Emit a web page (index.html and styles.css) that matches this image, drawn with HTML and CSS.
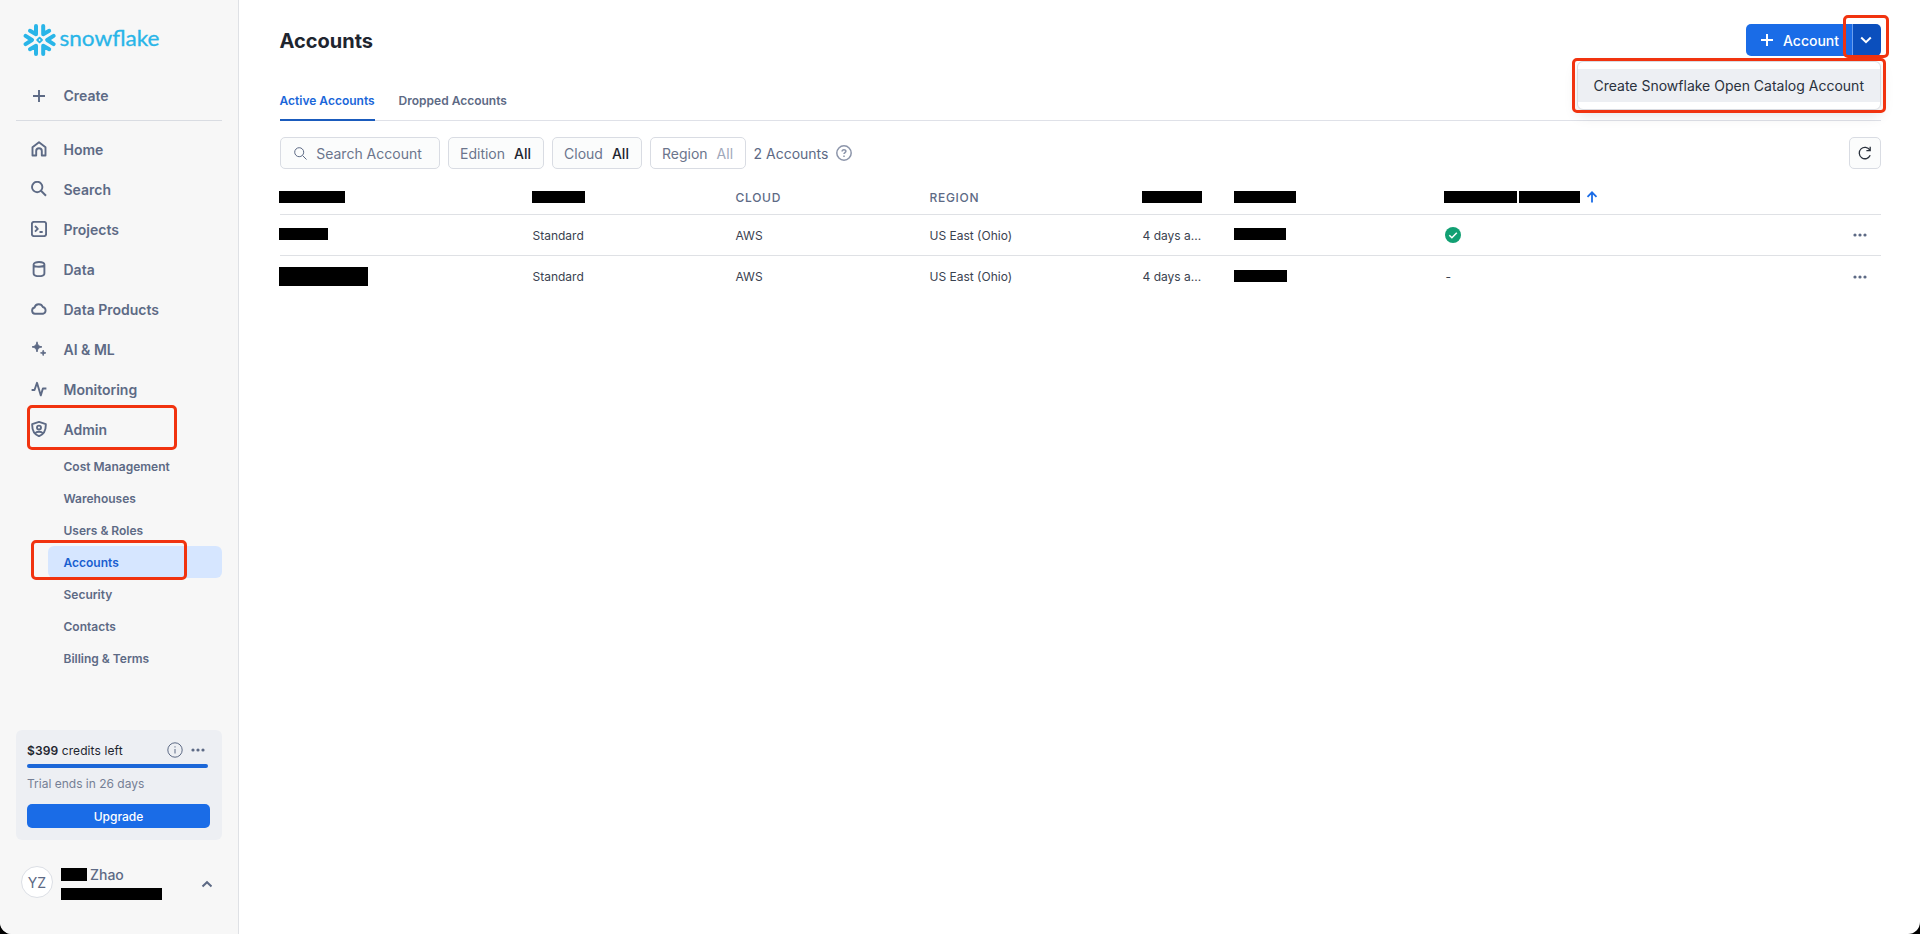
FILE: index.html
```html
<!DOCTYPE html>
<html lang="en">
<head>
    <meta charset="UTF-8">
    <meta name="viewport" content="width=device-width, initial-scale=1.0">
    <title>Accounts - Snowflake</title>
    <link rel="stylesheet" href="styles.css">
</head>
<body>
    <div class="app">
        <aside class="sidebar">
            <div class="logo">
                <svg width="144" height="34" viewBox="0 0 144 34">
                    <g fill="none" stroke="#29b5e8" stroke-width="4" stroke-linecap="round" stroke-linejoin="round">
                        <path d="M13 3v8.2l-6-3.4M20.2 3v8.2l6-3.4"/>
                        <path d="M13 31v-8.2l-6 3.4M20.2 31v-8.2l6 3.4"/>
                        <path d="M2.600 12.800L9 17l-6.400 4.200M30.600 12.800L24.200 17l6.400 4.200"/>
                        <path d="M16.600 14.600l2.400 2.400-2.400 2.400-2.400-2.400z" stroke-width="1.800"/>
                    </g>
                    <text class="logo-text" x="36.500" y="23" textLength="100" lengthAdjust="spacingAndGlyphs">snowflake</text>
                </svg>
            </div>

            <a class="nav-item create">
                <svg width="16" height="16" viewBox="0 0 16 16"><path d="M8 2v12M2 8h12"/></svg>
                <span>Create</span>
            </a>

            <nav class="nav">
                <a class="nav-item">
                    <svg width="16" height="16" viewBox="0 0 16 16"><path d="M1.500 6.200L8 1.200l6.500 5v8.300h-3.700V10a2.800 2.800 0 0 0-5.600 0v4.500H1.500z"/></svg>
                    <span>Home</span>
                </a>
                <a class="nav-item">
                    <svg width="16" height="16" viewBox="0 0 16 16"><circle cx="6.200" cy="6" r="5.200"/><path d="M10 9.800l5 4.900"/></svg>
                    <span>Search</span>
                </a>
                <a class="nav-item">
                    <svg width="16" height="16" viewBox="0 0 16 16"><rect x=".9" y=".9" width="14.200" height="14.200" rx="2"/><path d="M4 5l2.800 2.800L4 10.600M8.500 11h3.200"/></svg>
                    <span>Projects</span>
                </a>
                <a class="nav-item">
                    <svg width="16" height="16" viewBox="0 0 16 16"><path d="M2.600 3.600C2.600.2 13.400.2 13.400 3.600v8.600c0 4-10.800 4-10.800 0zM2.600 3.800c0 2.600 10.800 2.600 10.800 0"/></svg>
                    <span>Data</span>
                </a>
                <a class="nav-item">
                    <svg width="16" height="16" viewBox="0 0 16 16"><path d="M4 12.800a3.200 3.200 0 0 1-.4-6.300 4.300 4.300 0 0 1 8.200-.5 3.500 3.500 0 0 1 .2 6.800z"/></svg>
                    <span>Data Products</span>
                </a>
                <a class="nav-item">
                    <svg class="filled" width="16" height="16" viewBox="0 0 16 16"><path d="M6 .8c.7 3.500 1.600 4.400 5 5.100-3.400.7-4.300 1.600-5 5.100-.7-3.500-1.600-4.400-5-5.100 3.400-.7 4.300-1.600 5-5.100z"/><path d="M12.200 9.200c.4 1.800.9 2.300 2.700 2.700-1.800.4-2.300.9-2.700 2.700-.4-1.800-.9-2.300-2.700-2.700 1.800-.4 2.300-.9 2.700-2.700z"/></svg>
                    <span>AI &amp; ML</span>
                </a>
                <a class="nav-item">
                    <svg width="16" height="16" viewBox="0 0 16 16"><path d="M.6 9h2.900L6 1.800 9.800 14.400l2.100-6.900h3.500"/></svg>
                    <span>Monitoring</span>
                </a>
                <a class="nav-item">
                    <svg width="16" height="16" viewBox="0 0 16 16"><path d="M8 .9l6.800 2.300c.2 5.400-1.100 9.900-6.800 12-5.700-2.100-7-6.600-6.800-12zM4 12.600c1.600-2.400 6.400-2.400 8 0"/><circle cx="8" cy="6.600" r="2"/></svg>
                    <span>Admin</span>
                    <i class="mark mark-admin"></i>
                </a>
            </nav>

            <nav class="subnav">
                <a>Cost Management</a>
                <a>Warehouses</a>
                <a>Users &amp; Roles</a>
                <a class="active">Accounts<i class="mark mark-accounts"></i></a>
                <a>Security</a>
                <a>Contacts</a>
                <a>Billing &amp; Terms</a>
            </nav>

            <div class="trial">
                <div class="trial-head">
                    <span><b>$399</b> credits left</span>
                    <svg width="16" height="16" viewBox="0 0 16 16"><circle cx="8" cy="8" r="7.200"/><path d="M8 7v4.500M8 4.300v1.200"/></svg>
                    <svg class="dots" width="14" height="4" viewBox="0 0 14 4"><circle cx="2" cy="2" r="1.600"/><circle cx="7" cy="2" r="1.600"/><circle cx="12" cy="2" r="1.600"/></svg>
                </div>
                <div class="progress"></div>
                <p>Trial ends in 26 days</p>
                <button class="upgrade">Upgrade</button>
            </div>

            <div class="user">
                <div class="avatar">YZ</div>
                <div class="user-info">
                    <div class="user-name"><span class="redact r-first"></span>Zhao</div>
                    <span class="redact r-role"></span>
                </div>
                <svg width="12" height="8" viewBox="0 0 12 8"><path d="M1.500 6.500L6 2.200l4.500 4.300"/></svg>
            </div>
        </aside>

        <main class="main">
            <header class="header">
                <h1>Accounts</h1>
                <div class="split-button">
                    <button class="add">
                        <svg width="12" height="12" viewBox="0 0 12 12"><path d="M6 0v12M0 6h12"/></svg>
                        Account
                    </button>
                    <button class="toggle">
                        <svg width="12" height="8" viewBox="0 0 12 8"><path d="M1.200 1.500L6 6.100l4.800-4.600"/></svg>
                    </button>
                    <i class="mark mark-toggle"></i>
                    <div class="menu">
                        <div class="menu-item">Create Snowflake Open Catalog Account</div>
                        <i class="mark mark-menu"></i>
                    </div>
                </div>
            </header>

            <div class="tabs">
                <a class="tab active">Active Accounts</a>
                <a class="tab">Dropped Accounts</a>
            </div>

            <div class="filters">
                <div class="box search">
                    <svg width="13" height="13" viewBox="0 0 13 13"><circle cx="5.200" cy="5.200" r="4.500"/><path d="M8.500 8.500l4 4"/></svg>
                    Search Account
                </div>
                <div class="box edition">Edition <b>All</b></div>
                <div class="box cloud">Cloud <b>All</b></div>
                <div class="box region">Region <b>All</b></div>
                <span class="count">2 Accounts</span>
                <svg class="help" width="16" height="16" viewBox="0 0 16 16"><circle cx="8" cy="8" r="7.200"/><path d="M6.100 6.500c0-2.500 3.800-2.400 3.800-.2 0 1.300-1.900 1.400-1.900 2.800M8 10.600v1.300"/></svg>
                <button class="box refresh">
                    <svg width="14" height="14" viewBox="0 0 14 14"><path d="M12.200 9.300A5.700 5.700 0 1 1 11.800 4M12.200.8v3.800H8.400"/></svg>
                </button>
            </div>

            <div class="table">
                <div class="row head">
                    <span><i class="redact h1"></i></span>
                    <span><i class="redact h2"></i></span>
                    <span>CLOUD</span>
                    <span>REGION</span>
                    <span><i class="redact h3"></i></span>
                    <span><i class="redact h4"></i></span>
                    <span>
                        <i class="redact h5"></i><i class="redact h6"></i>
                        <svg class="sort" width="12" height="12" viewBox="0 0 12 12"><path d="M6 11.500V1.500M1.500 5.800L6 1.300l4.500 4.500"/></svg>
                    </span>
                    <span></span>
                </div>
                <div class="row">
                    <span><i class="redact n1"></i></span>
                    <span>Standard</span>
                    <span>AWS</span>
                    <span>US East (Ohio)</span>
                    <span>4 days a...</span>
                    <span><i class="redact l1"></i></span>
                    <span><svg class="check" width="16" height="16" viewBox="0 0 16 16"><circle cx="8" cy="8" r="8"/><path d="M4.300 8.200l2.600 2.500 4.900-5"/></svg></span>
                    <span><svg class="dots" width="14" height="4" viewBox="0 0 14 4"><circle cx="2" cy="2" r="1.600"/><circle cx="7" cy="2" r="1.600"/><circle cx="12" cy="2" r="1.600"/></svg></span>
                </div>
                <div class="row last">
                    <span><i class="redact n2"></i></span>
                    <span>Standard</span>
                    <span>AWS</span>
                    <span>US East (Ohio)</span>
                    <span>4 days a...</span>
                    <span><i class="redact l2"></i></span>
                    <span class="none">-</span>
                    <span><svg class="dots" width="14" height="4" viewBox="0 0 14 4"><circle cx="2" cy="2" r="1.600"/><circle cx="7" cy="2" r="1.600"/><circle cx="12" cy="2" r="1.600"/></svg></span>
                </div>
            </div>
        </main>
    </div>
</body>
</html>
```
FILE: styles.css
```css
* {
    box-sizing: border-box;
}
body {
    margin: 0;
    background: #000;
    font-family: Inter, sans-serif;
    font-size: 14px;
    color: #5d6a85;
}
h1, p {
    margin: 0;
}
button {
    padding: 0;
    border: none;
    font-family: inherit;
    cursor: pointer;
}
svg {
    display: block;
    flex-shrink: 0;
    fill: none;
    stroke: #5d6a85;
}
.app {
    display: flex;
    height: 934px;
    background: #fff;
    border-radius: 0 0 12px 12px;
    overflow: hidden;
}

/* sidebar */
.sidebar {
    width: 239px;
    padding: 0 16px;
    background: #f7f7f7;
    border-right: 1px solid #dfe1e5;
    display: flex;
    flex-direction: column;
}
.logo {
    height: 76px;
    padding: 23px 0 0 7px;
}
.logo svg {
    stroke: none;
}
.logo-text {
    font-family: Lato, sans-serif;
    font-size: 22px;
    fill: #29b5e8;
    stroke: #29b5e8;
    stroke-width: 0.3px;
}
.nav-item {
    position: relative;
    height: 40px;
    padding-left: 15px;
    display: flex;
    align-items: center;
    gap: 16.5px;
    font-weight: 600;
}
.nav-item svg {
    stroke-width: 1.9;
    stroke-linejoin: round;
}
.nav-item svg.filled {
    fill: #5d6a85;
    stroke-width: 0.9;
}
.create {
    width: 206px;
    height: 45px;
    padding-bottom: 5px;
    border-bottom: 1px solid #d9dce2;
}
.nav {
    padding-top: 8px;
}
.subnav {
    width: 206px;
    padding: 1px 0 0 32px;
    font-size: 12px;
    font-weight: 600;
}
.subnav a {
    position: relative;
    height: 32px;
    padding-left: 15.5px;
    display: flex;
    align-items: center;
}
.subnav .active {
    color: #1a5fd0;
    background: #d6e6ff;
    border-radius: 6px;
}
.mark {
    position: absolute;
    border: 3px solid #f1330f;
    border-radius: 5px;
    pointer-events: none;
}
.mark-admin {
    left: 11px;
    top: -4px;
    width: 150px;
    height: 45px;
}
.mark-accounts {
    left: -17px;
    top: -6px;
    width: 156px;
    height: 40px;
}
.trial {
    width: 206px;
    height: 110px;
    margin-top: 56px;
    padding: 12px 12px 0 11px;
    background: #edeff3;
    border-radius: 6px;
    font-size: 12px;
}
.trial-head {
    height: 16px;
    display: flex;
    align-items: center;
    color: #1e252f;
}
.trial-head span {
    flex: 1;
    letter-spacing: 0.1px;
}
.trial-head .dots {
    margin: 0 5px 0 8px;
}
.trial b {
    font-weight: 600;
}
.progress {
    width: 181px;
    height: 4px;
    margin-top: 6px;
    background: #1b67d8;
    border-radius: 2px;
}
.trial p {
    margin-top: 8px;
    line-height: 16px;
    color: #757f95;
}
.upgrade {
    display: block;
    width: 183px;
    height: 24px;
    margin-top: 12px;
    background: #1a6ce7;
    border-radius: 5px;
    color: #fff;
    font-size: 12px;
    font-weight: 500;
}
.user {
    width: 206px;
    height: 32px;
    margin-top: 26px;
    padding: 0 9px 0 5px;
    display: flex;
    align-items: center;
}
.user svg {
    margin-top: 4px;
    stroke-width: 2;
}
.avatar {
    width: 32px;
    height: 32px;
    border: 1px solid #dcdfe5;
    border-radius: 50%;
    background: #fff;
    line-height: 31px;
    text-align: center;
}
.user-info {
    flex: 1;
    padding: 1px 0 0 8px;
}
.user-name {
    height: 17px;
    display: flex;
    align-items: center;
    gap: 3px;
    font-weight: 500;
}
.redact {
    display: block;
    height: 12px;
    background: #000;
}
.r-first {
    width: 26px;
    height: 13px;
}
.r-role {
    width: 101px;
    margin-top: 5px;
}
.dots {
    fill: #5d6a85;
    stroke: none;
}

/* main */
.main {
    flex: 1;
    padding: 24px 39px 0 40.5px;
}
.header {
    height: 32px;
    display: flex;
    justify-content: space-between;
    align-items: center;
}
h1 {
    font-size: 20px;
    font-weight: 700;
    line-height: 32px;
    color: #1e252f;
    padding-top: 2px;
}
.split-button {
    position: relative;
    display: flex;
    height: 32px;
}
.split-button svg {
    stroke: #fff;
    stroke-width: 2;
}
.add {
    width: 106px;
    padding-left: 15px;
    display: flex;
    align-items: center;
    gap: 10px;
    background: #1a6ce7;
    border-radius: 5px 0 0 5px;
    color: #fff;
    font-size: 14px;
    font-weight: 500;
}
.toggle {
    width: 29px;
    padding-right: 2px;
    display: flex;
    align-items: center;
    justify-content: center;
    background: #0b4fbd;
    border-left: 1px solid #6c9fee;
    border-radius: 0 5px 5px 0;
}
.mark-toggle {
    right: -8px;
    top: -9px;
    width: 46px;
    height: 43px;
}
.menu {
    position: absolute;
    top: 37px;
    right: 0;
    z-index: 1;
    width: 304px;
    padding: 7px 0;
    background: #fff;
    border: 1px solid #d9dce2;
    border-radius: 6px;
    box-shadow: 0 6px 14px rgba(0, 0, 0, 0.1);
}
.menu-item {
    height: 33px;
    line-height: 34px;
    padding-left: 15.5px;
    background: #edeff3;
    color: #2a313d;
    white-space: nowrap;
}
.mark-menu {
    left: -6px;
    top: -4px;
    width: 314px;
    height: 55px;
}
.tabs {
    height: 41px;
    margin-top: 24px;
    display: flex;
    gap: 24px;
    border-bottom: 1px solid #dfe1e8;
    font-size: 12px;
    font-weight: 600;
}
.tab {
    height: 41px;
    line-height: 42px;
}
.tab.active {
    color: #1a66d9;
    border-bottom: 2px solid #1a5bbd;
}
.filters {
    margin-top: 16px;
    display: flex;
    align-items: center;
    gap: 8px;
}
.box {
    height: 32px;
    display: flex;
    align-items: center;
    justify-content: center;
    gap: 9px;
    background: #fbfcfc;
    border: 1px solid #d9dce3;
    border-radius: 5px;
    color: #6b758c;
}
.box b {
    font-weight: 500;
    color: #1e252f;
}
.search {
    width: 160px;
    padding-right: 3px;
}
.edition {
    width: 96px;
}
.cloud {
    width: 90px;
}
.region {
    width: 96px;
    background: #fff;
}
.region b {
    font-weight: 400;
    color: #9fa8bb;
}
.help {
    stroke: #8c95aa;
    stroke-width: 1.5;
}
.refresh {
    width: 32px;
    margin-left: auto;
}
.refresh svg {
    stroke: #2a313d;
    stroke-width: 1.3;
}
.table {
    margin-top: 11px;
    font-size: 12px;
    color: #3a4250;
}
.row {
    height: 41px;
    display: grid;
    grid-template-columns: 253px 203px 194px 213px 92px 210px 1fr 28px;
    align-items: center;
    border-bottom: 1px solid #dfe1e5;
}
.row > span {
    display: flex;
    align-items: center;
}
.head {
    height: 35px;
    font-weight: 500;
    letter-spacing: 0.7px;
    color: #5d6a85;
}
.last {
    border-bottom: none;
}
.none {
    padding-left: 1px;
}
.check {
    fill: #12a073;
    stroke: none;
}
.check path {
    fill: none;
    stroke: #fff;
    stroke-width: 1.5;
}
.sort {
    margin-left: 6px;
    stroke: #1a6ce7;
    stroke-width: 1.8;
}
.row .redact {
    margin-left: -0.5px;
}
.row .n1, .row .l1, .row .l2 {
    margin-bottom: 2px;
}
.h1 { width: 66px; }
.h2 { width: 53px; }
.h3 { width: 60px; }
.h4 { width: 62px; }
.h5 { width: 73px; margin-right: 2px; }
.h6 { width: 61px; }
.n1 { width: 49px; }
.n2 { width: 89px; height: 19px; }
.l1 { width: 52px; }
.l2 { width: 53px; }
```
